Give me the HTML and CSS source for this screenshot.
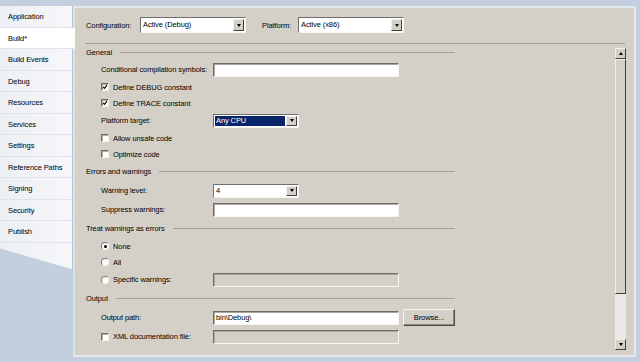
FILE: index.html
```html
<!DOCTYPE html>
<html lang="en">
  <head>
    <meta charset="UTF-8" />
    <title>Project Properties - Build</title>
    <link rel="stylesheet" href="styles.css">
  </head>
  <body>
    <!-- left tab strip -->
    <div class="tabs">
      <div class="tab">Application</div>
      <div class="tab active">Build*</div>
      <div class="tab">Build Events</div>
      <div class="tab">Debug</div>
      <div class="tab">Resources</div>
      <div class="tab">Services</div>
      <div class="tab">Settings</div>
      <div class="tab">Reference Paths</div>
      <div class="tab">Signing</div>
      <div class="tab">Security</div>
      <div class="tab">Publish</div>
      <div class="tab-tail"></div>
    </div>

    <div class="panel">
      <div class="toprow">
        <span class="lbl-config">Configuration:</span>
        <div class="select wide"><span class="val">Active (Debug)</span><span class="drop"><i class="down"></i></span></div>
        <span class="lbl-platform">Platform:</span>
        <div class="select wide"><span class="val">Active (x86)</span><span class="drop"><i class="down"></i></span></div>
      </div>
      <div class="divider"></div>

      <div class="body">
        <div class="sections">
          <div class="hdr first">General</div>
          <div class="row field">
            <span class="lbl">Conditional compilation symbols:</span>
            <span class="input"></span>
          </div>
          <div class="row">
            <span class="check on"><svg viewBox="0 0 7 7"><polyline points="1.3,3.3 2.8,5 5.8,1.4" /></svg></span>
            <span>Define DEBUG constant</span>
          </div>
          <div class="row">
            <span class="check on"><svg viewBox="0 0 7 7"><polyline points="1.3,3.3 2.8,5 5.8,1.4" /></svg></span>
            <span>Define TRACE constant</span>
          </div>
          <div class="row field">
            <span class="lbl">Platform target:</span>
            <div class="select"><span class="val picked">Any CPU</span><span class="drop"><i class="down"></i></span></div>
          </div>
          <div class="row">
            <span class="check"></span>
            <span>Allow unsafe code</span>
          </div>
          <div class="row">
            <span class="check"></span>
            <span>Optimize code</span>
          </div>

          <div class="hdr">Errors and warnings</div>
          <div class="row field">
            <span class="lbl">Warning level:</span>
            <div class="select"><span class="val">4</span><span class="drop"><i class="down"></i></span></div>
          </div>
          <div class="row field">
            <span class="lbl">Suppress warnings:</span>
            <span class="input"></span>
          </div>

          <div class="hdr">Treat warnings as errors</div>
          <div class="row">
            <span class="radio on"></span>
            <span>None</span>
          </div>
          <div class="row">
            <span class="radio"></span>
            <span>All</span>
          </div>
          <div class="row field">
            <span class="lbl"><span class="radio"></span><span>Specific warnings:</span></span>
            <span class="input off"></span>
          </div>

          <div class="hdr">Output</div>
          <div class="row field">
            <span class="lbl">Output path:</span>
            <span class="input">bin\Debug\</span>
            <span class="button">Browse...</span>
          </div>
          <div class="row field">
            <span class="lbl"><span class="check"></span><span>XML documentation file:</span></span>
            <span class="input off"></span>
          </div>
        </div>

        <!-- vertical scrollbar -->
        <div class="scroll">
          <span class="sbtn"><i class="up"></i></span>
          <span class="thumb"></span>
          <span class="track"></span>
          <span class="sbtn"><i class="down"></i></span>
        </div>
      </div>
    </div>
  </body>
</html>
```

FILE: styles.css
```css
* {
  box-sizing: border-box;
}

body {
  margin: 0;
  width: 640px;
  height: 362px;
  padding: 6px 4px 5px 0;
  display: flex;
  overflow: hidden;
  background-color: #c3cede;
  font-family: "Liberation Sans", Arial, sans-serif;
  font-size: 7.5px;
  letter-spacing: -0.1px;
  color: #000;
}

/* Tab strip */
.tabs {
  width: 73px;
  display: flex;
  flex-direction: column;
}

.tab {
  height: 21.5px;
  line-height: 21px;
  padding-left: 8px;
  background: linear-gradient(to right, #eceff4, #f6f7f9);
  border-bottom: 1px solid #e0e4ea;
  border-right: 1px solid #b7c2d2;
}

.tab.active {
  position: relative;
  z-index: 1;
  margin-right: -2px;
  background: #fff;
  border-right-color: #fff;
}

.tab-tail {
  height: 27px;
  background: linear-gradient(to right, #eceff4, #f6f7f9);
  border-right: 1px solid #b7c2d2;
  clip-path: polygon(0 0, 100% 0, 100% 100%, 0 22%);
}

/* Main panel */
.panel {
  flex: 1;
  display: flex;
  flex-direction: column;
  padding: 9px 9px 0 10px;
  background-color: #d4d0c8;
  border: 2px solid #e3e8ef;
  border-left-color: #dce2ea;
}

.toprow {
  height: 16px;
  display: flex;
  align-items: center;
}

.lbl-config {
  width: 55px;
  padding-left: 1px;
}

.lbl-platform {
  width: 36px;
  margin-left: 16px;
}

.divider {
  margin-top: 10px;
  border-top: 1px solid #a19d96;
}

.body {
  display: flex;
}

.sections {
  width: 370px;
}

.hdr {
  height: 19px;
  display: flex;
  align-items: center;
  padding-left: 1px;
}

.hdr.first {
  height: 16px;
}

.hdr::after {
  content: "";
  flex: 1;
  margin-left: 8px;
  border-top: 1px solid #a4a09a;
}

.row {
  height: 16px;
  display: flex;
  align-items: center;
  padding-left: 16px;
}

.row.field {
  height: 19px;
}

.lbl {
  width: 112px;
  display: flex;
  align-items: center;
}

/* Controls */
.input {
  width: 186px;
  height: 14px;
  line-height: 12px;
  padding-left: 2px;
  background: #fff;
  border: 1px solid;
  border-color: #6e6e6e #f6f5f2 #f6f5f2 #6e6e6e;
  box-shadow: inset 1px 1px 0 #aaa7a0;
}

.input.off {
  background: #d4d0c8;
}

.select {
  width: 86px;
  height: 14px;
  display: flex;
  padding: 1px;
  background: #fff;
  border: 1px solid;
  border-color: #6e6e6e #f6f5f2 #f6f5f2 #6e6e6e;
}

.select.wide {
  width: 106px;
  height: 16px;
}

.val {
  flex: 1;
  padding-left: 1px;
  line-height: 10px;
}

.select.wide .val {
  line-height: 12px;
}

.val.picked {
  background: #0a246a;
  color: #fff;
  margin-right: 1px;
}

.drop,
.sbtn {
  width: 11px;
  display: flex;
  align-items: center;
  justify-content: center;
  background: #d4d0c8;
  border: 1px solid;
  border-color: #f1efe9 #404040 #404040 #f1efe9;
}

i.down {
  border-left: 2.5px solid transparent;
  border-right: 2.5px solid transparent;
  border-top: 3px solid #000;
}

i.up {
  border-left: 2.5px solid transparent;
  border-right: 2.5px solid transparent;
  border-bottom: 3px solid #000;
}

.button {
  width: 52px;
  height: 17px;
  margin-left: 4px;
  line-height: 15px;
  text-align: center;
  background: #d4d0c8;
  border: 1px solid;
  border-color: #f3f2ee #4a4a4a #4a4a4a #f3f2ee;
  box-shadow: inset -1px -1px 0 #8c8880;
}

.check {
  width: 8px;
  height: 8px;
  margin-right: 4px;
  background: #fff;
  border: 1px solid;
  border-color: #6e6e6e #f3f2ee #f3f2ee #6e6e6e;
  box-shadow: inset 1px 1px 0 #b0aca4;
  display: flex;
}

.check svg {
  width: 6px;
  height: 6px;
  fill: none;
  stroke: #000;
  stroke-width: 1.4;
}

.radio {
  position: relative;
  width: 8px;
  height: 8px;
  margin-right: 4px;
  border-radius: 50%;
  background: #fff;
  border: 1px solid;
  border-color: #7a7a7a #f3f2ee #f3f2ee #7a7a7a;
}

.radio.on::after {
  content: "";
  position: absolute;
  left: 1.5px;
  top: 1.5px;
  width: 3px;
  height: 3px;
  border-radius: 50%;
  background: #000;
}

/* Scrollbar */
.scroll {
  width: 11px;
  height: 302px;
  margin: 4px -1px 0 auto;
  display: flex;
  flex-direction: column;
}

.sbtn {
  height: 11px;
  flex-shrink: 0;
}

.thumb {
  height: 235px;
  background: #d4d0c8;
  border: 1px solid;
  border-color: #f1efe9 #404040 #404040 #f1efe9;
}

.track {
  flex: 1;
  background: #ebe9e5;
}
```
